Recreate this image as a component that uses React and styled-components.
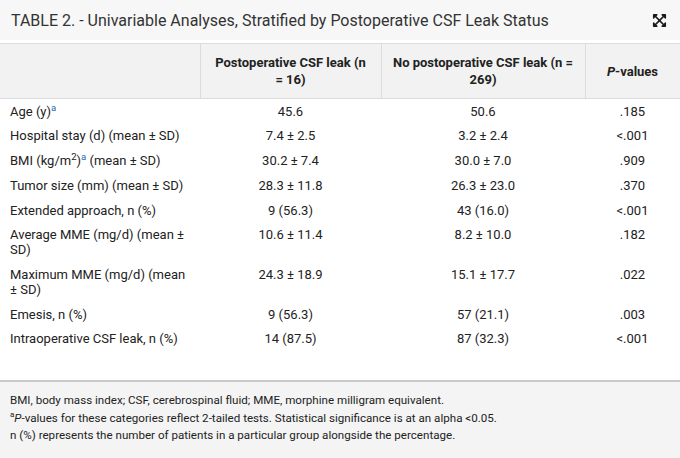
import React from 'react';
import styled, { createGlobalStyle } from 'styled-components';
import { FaExpandArrowsAlt } from 'react-icons/fa';

const GlobalStyle = createGlobalStyle`
  body {
    margin: 0;
    background: #fff;
    font-family: Roboto, "Open Sans", sans-serif;
    color: #222;
  }
`;

const Panel = styled.div`
  width: 680px;
  display: flex;
  flex-direction: column;
`;

const TitleBar = styled.div`
  height: 40px;
  background: #f7f7f7;
  display: flex;
  align-items: center;
  justify-content: space-between;
  padding: 0 13px 0 11px;
  margin-bottom: 3px;
`;

const Title = styled.h2`
  margin: 0;
  font-size: 16px;
  font-weight: 400;
  color: #333;
`;

const ExpandButton = styled.button`
  border: none;
  background: none;
  padding: 0;
  display: flex;
  color: #1a1a1a;
  cursor: pointer;
`;

const TableWrap = styled.div`
  padding-bottom: 29px;
  border-bottom: 2px solid #c9c9c9;
`;

const Table = styled.table`
  width: 680px;
  border-collapse: collapse;
  table-layout: fixed;
  font-size: 13px;
`;

const HeadCell = styled.th`
  background: #f2f2f2;
  border: 1px solid #dcdcdc;
  border-left: ${(p) => (p.$first ? 'none' : '1px solid #dcdcdc')};
  padding: 10px 10px;
  height: 54px;
  box-sizing: border-box;
  font-weight: 700;
  font-size: 13px;
  line-height: 17px;
  text-align: center;
  color: #222;
  vertical-align: middle;
`;

const Cell = styled.td`
  padding: 4.8px 10px 4.9px;
  line-height: 15px;
  vertical-align: top;
  text-align: ${(p) => (p.$label ? 'left' : 'center')};
  color: #222;
`;

const Note = styled.sup`
  color: #2f64a8;
  font-size: 9.5px;
  line-height: 0;
`;

const Footer = styled.div`
  background: #f4f4f4;
  padding: 10px 10px 16px;
  font-size: 11.6px;
  line-height: 17.5px;
  color: #222;
`;

const FootLine = styled.p`
  margin: 0;
`;

const rows = [
  [<>Age (y)<Note>a</Note></>, '45.6', '50.6', '.185'],
  ['Hospital stay (d) (mean ± SD)', '7.4 ± 2.5', '3.2 ± 2.4', '<.001'],
  [<>BMI (kg/m<sup style={{ fontSize: '9.5px', lineHeight: 0 }}>2</sup>)<Note>a</Note> (mean ± SD)</>, '30.2 ± 7.4', '30.0 ± 7.0', '.909'],
  ['Tumor size (mm) (mean ± SD)', '28.3 ± 11.8', '26.3 ± 23.0', '.370'],
  ['Extended approach, n (%)', '9 (56.3)', '43 (16.0)', '<.001'],
  ['Average MME (mg/d) (mean ± SD)', '10.6 ± 11.4', '8.2 ± 10.0', '.182'],
  ['Maximum MME (mg/d) (mean ± SD)', '24.3 ± 18.9', '15.1 ± 17.7', '.022'],
  ['Emesis, n (%)', '9 (56.3)', '57 (21.1)', '.003'],
  ['Intraoperative CSF leak, n (%)', '14 (87.5)', '87 (32.3)', '<.001'],
];

export default function App() {
  return (
    <>
      <GlobalStyle />
      <Panel>
        <TitleBar>
          <Title>TABLE 2. - Univariable Analyses, Stratified by Postoperative CSF Leak Status</Title>
          <ExpandButton aria-label="Expand table">
            <FaExpandArrowsAlt size={15} />
          </ExpandButton>
        </TitleBar>
        <TableWrap>
          <Table>
            <colgroup>
              <col style={{ width: 200 }} />
              <col style={{ width: 181 }} />
              <col style={{ width: 204 }} />
              <col style={{ width: 95 }} />
            </colgroup>
            <thead>
              <tr>
                <HeadCell $first />
                <HeadCell>Postoperative CSF leak (n = 16)</HeadCell>
                <HeadCell>No postoperative CSF leak (n = 269)</HeadCell>
                <HeadCell>
                  <i>P</i>-values
                </HeadCell>
              </tr>
            </thead>
            <tbody>
              {rows.map((r, i) => (
                <tr key={i}>
                  <Cell $label>{r[0]}</Cell>
                  <Cell>{r[1]}</Cell>
                  <Cell>{r[2]}</Cell>
                  <Cell>{r[3]}</Cell>
                </tr>
              ))}
            </tbody>
          </Table>
        </TableWrap>
        <Footer>
          <FootLine>BMI, body mass index; CSF, cerebrospinal fluid; MME, morphine milligram equivalent.</FootLine>
          <FootLine>
            <sup style={{ fontSize: '8px', lineHeight: 0 }}>a</sup>
            <i>P</i>-values for these categories reflect 2-tailed tests. Statistical significance is at an alpha &lt;0.05.
          </FootLine>
          <FootLine>n (%) represents the number of patients in a particular group alongside the percentage.</FootLine>
        </Footer>
      </Panel>
    </>
  );
}
